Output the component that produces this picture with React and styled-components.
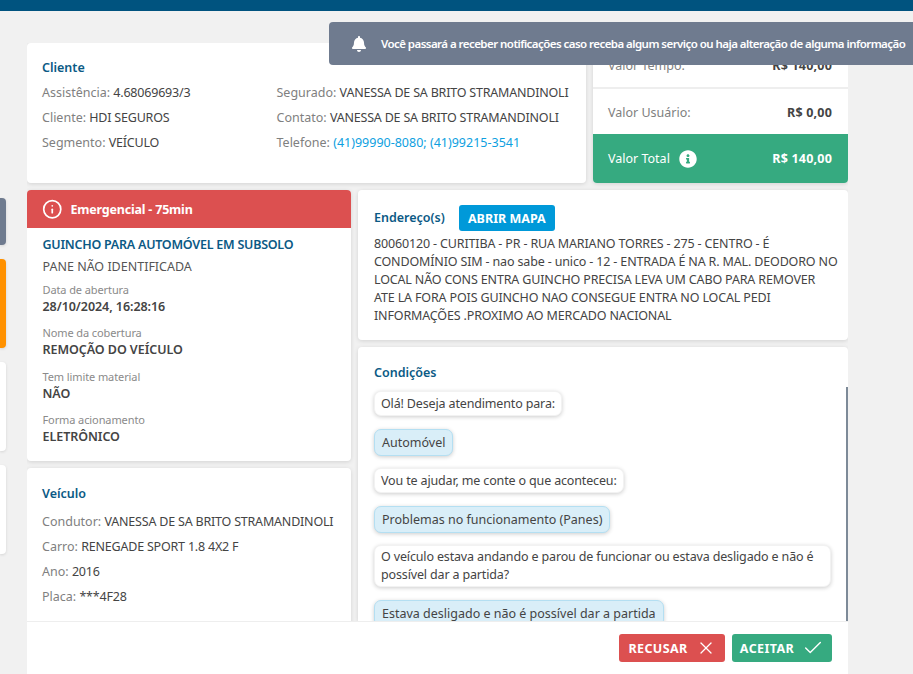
import React from 'react';
import styled, { createGlobalStyle } from 'styled-components';
import { FaBell, FaInfoCircle } from 'react-icons/fa';
import { Info, X, Check } from 'lucide-react';

const Global = createGlobalStyle`
  html, body { margin: 0; padding: 0; height: 100%; background: #f1f1f1; overflow: hidden; }
  body { font-family: "Noto Sans", "Open Sans", sans-serif; font-size: 12.5px; letter-spacing: -0.15px; color: #444; }
  * { box-sizing: border-box; }
`;
const Page = styled.div`width: 913px; height: 674px; display: flex; flex-direction: column; position: relative; overflow: hidden;`;
const TopBar = styled.div`height: 11px; background: #00537f; flex: none;`;
const Body = styled.div`flex: 1; min-height: 0; display: flex; gap: 21px;`;
const Rail = styled.div`width: 6px; flex: none; padding-top: 187px; display: flex; flex-direction: column; gap: 14px;`;
const RailItem = styled.div`height: ${p => p.$h}px; background: ${p => p.$c}; border-radius: 0 4px 4px 0; box-shadow: 0 1px 3px rgba(0,0,0,.12);`;
const Modal = styled.div`width: 821px; flex: none; display: flex; flex-direction: column; padding-top: 32px; min-height: 0;`;
const Content = styled.div`flex: 1; min-height: 0; overflow: hidden; display: flex; flex-direction: column; gap: 7px;`;
const Row = styled.div`display: flex; gap: 7px; flex: none;`;
const Card = styled.div`background: #fff; border-radius: 4px; box-shadow: 0 1px 4px rgba(0,0,0,.13);`;
const ClientCard = styled(Card)`width: 559px; height: 140px; padding: 16px 15px;`;
const Heading = styled.div`color: #0b5a85; font-weight: 600; font-size: 12.5px; line-height: 18px; letter-spacing: 0;`;
const ClientGrid = styled.div`display: grid; grid-template-columns: 234.5px 1fr; margin-top: 3px;`;
const VehicleLines = styled.div`margin-top: 6px;`;
const Line = styled.div`line-height: 25px; white-space: nowrap; color: #808080; letter-spacing: 0;`;
const Val = styled.span`color: #444; letter-spacing: -0.2px;`;
const Link = styled.span`color: #0e9fdf; letter-spacing: 0;`;
const Values = styled(Card)`width: 255px; height: 140px; overflow: hidden; display: flex; flex-direction: column;`;
const ValueRow = styled.div`flex: none; height: ${p => p.$h}px; display: flex; align-items: center; justify-content: space-between; padding: 1px 16px 0 15px; border-bottom: ${p => p.$line ? '2px solid #eee' : 'none'}; color: #808080; letter-spacing: 0;`;
const Strong = styled.span`font-weight: 700; color: #444; letter-spacing: 0.2px;`;
const TotalRow = styled.div`flex: 1; background: #36aa80; color: #fff; display: flex; align-items: center; justify-content: space-between; padding: 0 16px 0 15px; letter-spacing: 0;`;
const TotalLabel = styled.span`display: flex; align-items: center; gap: 9px;`;
const TotalValue = styled.span`font-weight: 700; letter-spacing: 0.2px;`;
const Columns = styled.div`flex: 1; min-height: 0; display: flex; gap: 7px;`;
const LeftCol = styled.div`width: 324px; flex: none; display: flex; flex-direction: column; gap: 7px;`;
const RightCol = styled.div`width: 490px; flex: none; display: flex; flex-direction: column; gap: 7px;`;
const Service = styled(Card)`height: 271px; overflow: hidden; flex: none;`;
const Alert = styled.div`height: 38px; background: #dc5050; color: #fff; display: flex; align-items: center; gap: 8px; padding-left: 15px; font-weight: 700; font-size: 12.5px; letter-spacing: -0.2px;`;
const ServiceBody = styled.div`padding: 7px 15.5px;`;
const ServiceTitle = styled.div`color: #0b5a85; font-weight: 600; font-size: 12.5px; line-height: 20px; letter-spacing: -0.24px;`;
const Plain = styled.div`line-height: 24px; color: #555; margin-bottom: 3px; letter-spacing: 0;`;
const Field = styled.div`margin-bottom: 9.33px;`;
const FieldLabel = styled.div`font-size: 11px; line-height: 16px; color: #8a8a8a; letter-spacing: -0.1px;`;
const FieldValue = styled.div`font-weight: 600; line-height: 18px; color: #444; letter-spacing: -0.05px;`;
const Vehicle = styled(Card)`flex: 1; padding: 17px 15px;`;
const Address = styled(Card)`height: 150px; flex: none; padding: 15px 16px;`;
const AddressHead = styled.div`display: flex; align-items: center; gap: 14px;`;
const MapButton = styled.button`height: 26px; width: 96px; border: 0; border-radius: 3px; background: #0099d9; color: #fff; font: 700 12.5px "Noto Sans", sans-serif; padding: 0;`;
const AddressText = styled.div`margin-top: 4px; line-height: 18px; color: #444; width: 464px;`;
const Conditions = styled(Card)`flex: 1; min-height: 0; overflow: hidden; padding-top: 17px; border-radius: 4px 4px 0 0;`;
const CondHead = styled(Heading)`padding-left: 16px; margin-bottom: 5px;`;
const Chat = styled.div`border-right: 2px solid #7d8a98; padding: 4px 15px 0 16px; height: 300px; display: flex; flex-direction: column; align-items: flex-start; gap: 12.5px;`;
const Bubble = styled.div`padding: ${p => p.$me ? '4px 7px 3px' : '2px 6px'}; min-height: 25px; line-height: 18px; display: flex; align-items: center; letter-spacing: ${p => p.$me ? '0' : '-0.15px'}; background: ${p => p.$me ? '#d9eef8' : '#fff'}; border: 1px solid ${p => p.$me ? '#b4dff2' : '#f2f2f2'}; border-radius: 7px; box-shadow: 0 1px 4px rgba(0,0,0,.2); color: #444;`;
const Footer = styled.div`height: 53px; flex: none; background: #fff; display: flex; justify-content: flex-end; align-items: center; gap: 7px; padding: 0 16px 0 0; border-top: 1px solid #eee;`;
const ActionButton = styled.button`height: 28px; width: ${p => p.$w}px; border: 0; border-radius: 3px; background: ${p => p.$c}; color: #fff; font: 700 12.5px "Noto Sans", sans-serif; letter-spacing: 0.4px; display: flex; align-items: center; justify-content: center; gap: 8px; padding: 0;`;
const Toast = styled.div`position: absolute; left: 329px; top: 22px; width: 584px; height: 43px; background: #6f7b8f; border-radius: 4px 0 0 4px; color: #fff; display: flex; align-items: center; padding-left: 22px; gap: 14px; font-weight: 600; font-size: 11.5px; letter-spacing: -0.55px; white-space: nowrap; svg { flex: none; }`;

const fields = [
  ['Data de abertura', '28/10/2024, 16:28:16'],
  ['Nome da cobertura', 'REMOÇÃO DO VEÍCULO'],
  ['Tem limite material', 'NÃO'],
  ['Forma acionamento', 'ELETRÔNICO'],
];

export default function App() {
  return (
    <Page>
      <Global />
      <TopBar />
      <Body>
        <Rail>
          <RailItem $h={47} $c="#6f7b8f" />
          <RailItem $h={89} $c="#ff9100" />
          <RailItem $h={89} $c="#fff" />
          <RailItem $h={89} $c="#fff" />
        </Rail>
        <Modal>
          <Content>
            <Row>
              <ClientCard>
                <Heading>Cliente</Heading>
                <ClientGrid>
                  <div>
                    <Line>Assistência: <Val>4.68069693/3</Val></Line>
                    <Line>Cliente: <Val>HDI SEGUROS</Val></Line>
                    <Line>Segmento: <Val>VEÍCULO</Val></Line>
                  </div>
                  <div>
                    <Line>Segurado: <Val>VANESSA DE SA BRITO STRAMANDINOLI</Val></Line>
                    <Line>Contato: <Val>VANESSA DE SA BRITO STRAMANDINOLI</Val></Line>
                    <Line>Telefone: <Link>(41)99990-8080; (41)99215-3541</Link></Line>
                  </div>
                </ClientGrid>
              </ClientCard>
              <Values>
                <ValueRow $h={46} $line>Valor Tempo: <Strong>R$ 140,00</Strong></ValueRow>
                <ValueRow $h={45}>Valor Usuário: <Strong>R$ 0,00</Strong></ValueRow>
                <TotalRow>
                  <TotalLabel>Valor Total <FaInfoCircle size={18} /></TotalLabel>
                  <TotalValue>R$ 140,00</TotalValue>
                </TotalRow>
              </Values>
            </Row>
            <Columns>
              <LeftCol>
                <Service>
                  <Alert><Info size={20.5} strokeWidth={2} /> Emergencial - 75min</Alert>
                  <ServiceBody>
                    <ServiceTitle>GUINCHO PARA AUTOMÓVEL EM SUBSOLO</ServiceTitle>
                    <Plain>PANE NÃO IDENTIFICADA</Plain>
                    {fields.map(([l, v]) => (
                      <Field key={l}>
                        <FieldLabel>{l}</FieldLabel>
                        <FieldValue>{v}</FieldValue>
                      </Field>
                    ))}
                  </ServiceBody>
                </Service>
                <Vehicle>
                  <Heading>Veículo</Heading>
                  <VehicleLines>
                    <Line>Condutor: <Val>VANESSA DE SA BRITO STRAMANDINOLI</Val></Line>
                    <Line>Carro: <Val>RENEGADE SPORT 1.8 4X2 F</Val></Line>
                    <Line>Ano: <Val>2016</Val></Line>
                    <Line>Placa: <Val>***4F28</Val></Line>
                  </VehicleLines>
                </Vehicle>
              </LeftCol>
              <RightCol>
                <Address>
                  <AddressHead>
                    <Heading>Endereço(s)</Heading>
                    <MapButton>ABRIR MAPA</MapButton>
                  </AddressHead>
                  <AddressText>80060120 - CURITIBA - PR - RUA MARIANO TORRES - 275 - CENTRO - É CONDOMÍNIO SIM - nao sabe - unico - 12 - ENTRADA É NA R. MAL. DEODORO NO LOCAL NÃO CONS ENTRA GUINCHO PRECISA LEVA UM CABO PARA REMOVER ATE LA FORA POIS GUINCHO NAO CONSEGUE ENTRA NO LOCAL PEDI INFORMAÇÕES .PROXIMO AO MERCADO NACIONAL</AddressText>
                </Address>
                <Conditions>
                  <CondHead>Condições</CondHead>
                  <Chat>
                    <Bubble>Olá! Deseja atendimento para:</Bubble>
                    <Bubble $me>Automóvel</Bubble>
                    <Bubble>Vou te ajudar, me conte o que aconteceu:</Bubble>
                    <Bubble $me>Problemas no funcionamento (Panes)</Bubble>
                    <Bubble>O veículo estava andando e parou de funcionar ou estava desligado e não é possível dar a partida?</Bubble>
                    <Bubble $me>Estava desligado e não é possível dar a partida</Bubble>
                  </Chat>
                </Conditions>
              </RightCol>
            </Columns>
          </Content>
          <Footer>
            <ActionButton $c="#dc5050" $w={106}>RECUSAR <X size={20} strokeWidth={1.5} /></ActionButton>
            <ActionButton $c="#36aa80" $w={100}>ACEITAR <Check size={22} strokeWidth={1.5} /></ActionButton>
          </Footer>
        </Modal>
      </Body>
      <Toast><FaBell size={16} /> <span>Você passará a receber notificações caso receba algum serviço ou haja alteração de alguma informação</span></Toast>
    </Page>
  );
}
